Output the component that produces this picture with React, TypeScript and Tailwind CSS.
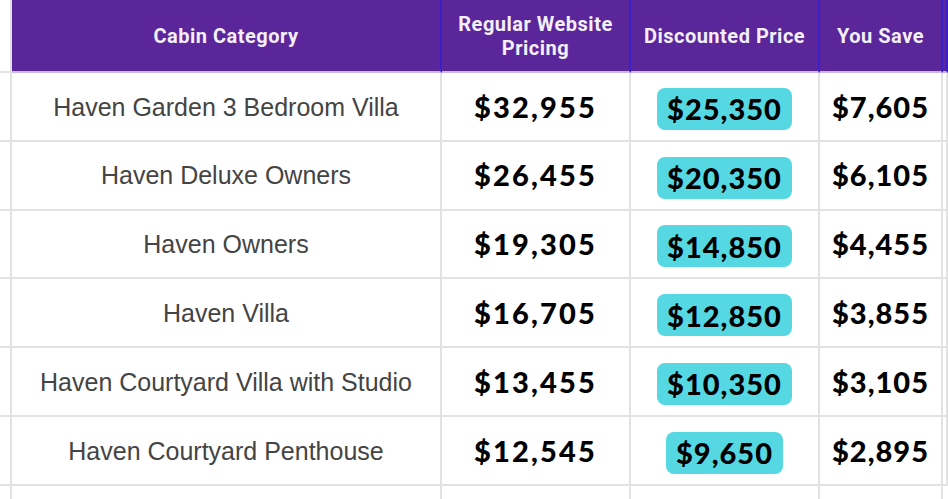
import React from "react";

const rows = [
  { name: "Haven Garden 3 Bedroom Villa", reg: "$32,955", disc: "$25,350", save: "$7,605" },
  { name: "Haven Deluxe Owners", reg: "$26,455", disc: "$20,350", save: "$6,105" },
  { name: "Haven Owners", reg: "$19,305", disc: "$14,850", save: "$4,455" },
  { name: "Haven Villa", reg: "$16,705", disc: "$12,850", save: "$3,855" },
  { name: "Haven Courtyard Villa with Studio", reg: "$13,455", disc: "$10,350", save: "$3,105" },
  { name: "Haven Courtyard Penthouse", reg: "$12,545", disc: "$9,650", save: "$2,895" },
];

const cols = "grid grid-cols-[12px_430px_189px_189px_123px_1fr]";
const cell = "border-r-2 border-b-2 border-[#e2e2e2] flex items-center justify-center";
const head = "border-r-2 border-[#3b1fc9] border-b-2 border-b-[#c9b8e8] bg-[#5b2699] flex items-center justify-center text-center text-[#f4effc] font-bold text-[20px] leading-[24px] tracking-[0.5px]";

export default function App() {
  return (
    <div className="w-[948px] h-[499px] overflow-hidden bg-white" style={{ fontFamily: "Lato, sans-serif" }}>
      <div className={`${cols} h-[73px]`} style={{ fontFamily: "Roboto, sans-serif" }}>
        <div className="border-r-2 border-b-2 border-[#e2e2e2] bg-white" />
        <div className={head}>Cabin Category</div>
        <div className={head}>
          Regular Website
          <br />
          Pricing
        </div>
        <div className={head}>Discounted Price</div>
        <div className={head}>You Save</div>
        <div className={head + " border-r-0"} />
      </div>
      {rows.map((r) => (
        <div key={r.name} className={`${cols} h-[68.8px]`}>
          <div className={cell} />
          <div className={cell}>
            <span className="text-[25px] text-[#444444] mt-[2px]" style={{ fontFamily: "'Liberation Sans', Arial, sans-serif" }}>
              {r.name}
            </span>
          </div>
          <div className={cell}>
            <span className="font-black text-[29px] text-black tracking-[2.2px]">{r.reg}</span>
          </div>
          <div className={cell}>
            <span className="bg-[#56d8e2] rounded-[8px] px-[10px] h-[42px] mt-[5px] flex items-center font-black text-[29px] text-black tracking-[1px]">
              {r.disc}
            </span>
          </div>
          <div className={cell}>
            <span className="font-black text-[29px] text-black tracking-[1px]">{r.save}</span>
          </div>
          <div className={cell + " border-r-0"} />
        </div>
      ))}
      <div className={`${cols} h-[20px]`}>
        <div className="border-r-2 border-[#e2e2e2]" />
        <div className="border-r-2 border-[#e2e2e2]" />
        <div className="border-r-2 border-[#e2e2e2]" />
        <div className="border-r-2 border-[#e2e2e2]" />
        <div className="border-r-2 border-[#e2e2e2]" />
        <div />
      </div>
    </div>
  );
}
